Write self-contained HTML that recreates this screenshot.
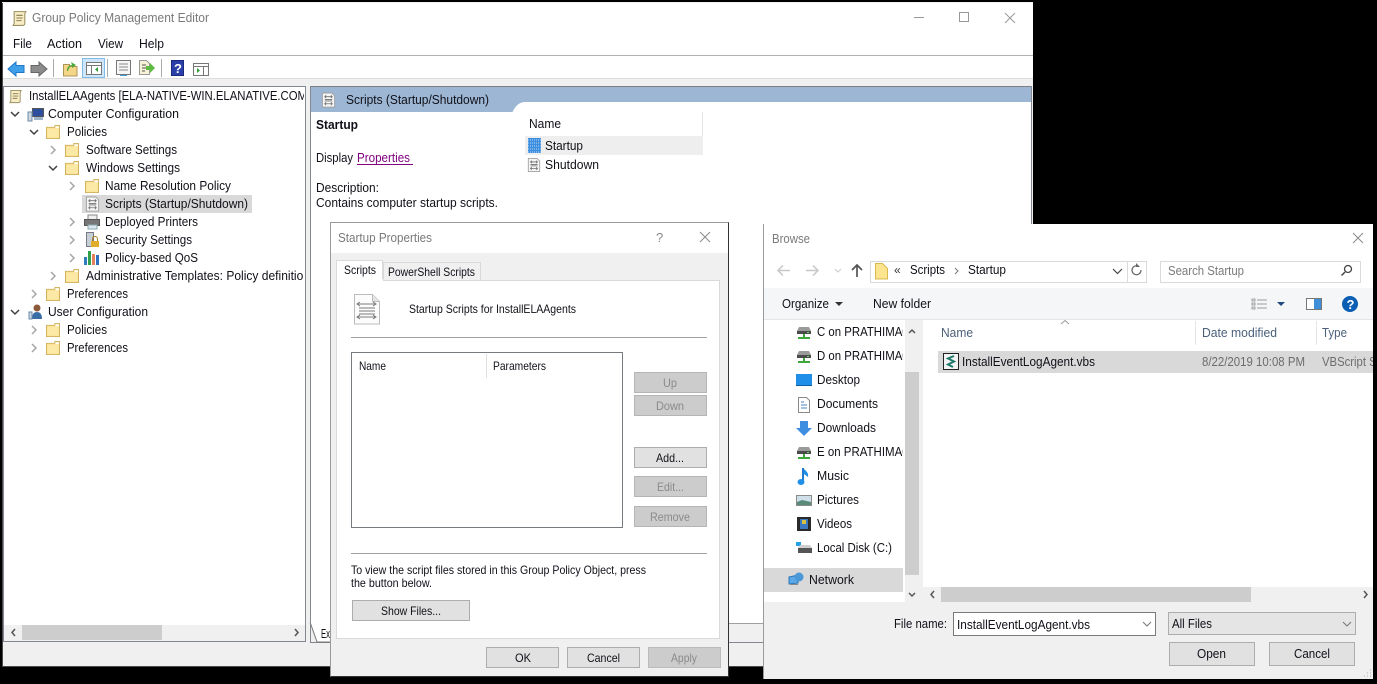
<!DOCTYPE html>
<html><head><meta charset="utf-8"><title>Group Policy Management Editor</title>
<style>
html,body{margin:0;padding:0;background:#000;width:1377px;height:684px;overflow:hidden}
svg{display:block}
text{font-family:"Liberation Sans",sans-serif;font-size:12.5px;fill:#101018}
.g{fill:#7a7a7a}.d{fill:#8a8a8a}.n{font-size:12px}
</style></head><body>
<svg xmlns="http://www.w3.org/2000/svg" width="1377" height="684" viewBox="0 0 1377 684">
<defs>
<symbol id="f" viewBox="0 0 15 15" overflow="visible"><path d="M.5 2.500h9v-2h5v14h-14z" fill="#fbe08a" stroke="#d0b060"/><path d="M10 1.500h4v2h-4z" fill="#fff"/><path d="M1.500 4h12v9.500h-12z" fill="#fde9a6"/></symbol>
<symbol id="cr" viewBox="0 0 10 10"><path d="M3 1l4 4-4 4" fill="none" stroke="#a6a6a6" stroke-width="1.500"/></symbol>
<symbol id="cd" viewBox="0 0 10 10"><path d="M1 3l4 4 4-4" fill="none" stroke="#404040" stroke-width="1.500"/></symbol>
<symbol id="s" viewBox="0 0 16 16"><path d="M1.500.5h10l3 3v12h-13z" fill="#f6f6f6" stroke="#a0a0a0"/><path d="M4 4.500h8M4 7.500h8M4 9h8M4 12h8M5.500 3L4 4.500 5.500 6M10.500 3L12 4.500 10.500 6M5.500 10.500L4 12l1.500 1.500M10.500 10.500L12 12l-1.500 1.500" stroke="#6f6f6f" fill="none" stroke-width=".9"/></symbol>
<symbol id="roll" viewBox="0 0 16 16"><path d="M3 1.500h11l-1 2v9c0 1.500-1 2-2 2H2l1-2z" fill="#f7edc6" stroke="#9c8f62"/><path d="M5 5h6M5 7.500h6M5 10h5" stroke="#8a7d50" fill="none"/></symbol>
<symbol id="nd" viewBox="0 0 16 14"><path d="M1 5l2-4h10l2 4v3H1z" fill="#9a9a9a"/><path d="M1 5h14v3H1z" fill="#4b4b4b"/><rect x="11" y="6" width="2" height="1" fill="#5fe05f"/><path d="M8 8v3M2 12h12" stroke="#3da63d" stroke-width="2"/></symbol>
<clipPath id="c1"><rect x="5" y="88" width="299" height="536"/></clipPath>
<clipPath id="c2"><rect x="764" y="320" width="139" height="270"/></clipPath>
<clipPath id="c3"><rect x="925" y="320" width="448" height="266"/></clipPath>
</defs>

<rect x="0" y="0" width="1377" height="684" fill="#000"/>
<!-- main window -->
<rect x="2" y="2" width="1031" height="664" fill="#f0f0f0"/>
<path d="M2.500 3v663.500H1033" fill="none" stroke="#4a4a4a"/>
<rect x="3" y="3" width="1030" height="76" fill="#fff"/>
<use href="#roll" x="11" y="10" width="17" height="17"/>
<text class="g" x="32" y="22" textLength="177" lengthAdjust="spacingAndGlyphs">Group Policy Management Editor</text>
<path d="M914 17.500h10" stroke="#999"/><rect x="959.500" y="12.500" width="9" height="9" fill="none" stroke="#999"/><path d="M1005 13l10 10M1015 13l-10 10" stroke="#999"/>
<text x="13" y="48" textLength="19" lengthAdjust="spacingAndGlyphs">File</text>
<text x="47" y="48" textLength="35" lengthAdjust="spacingAndGlyphs">Action</text>
<text x="98" y="48" textLength="25" lengthAdjust="spacingAndGlyphs">View</text>
<text x="139" y="48" textLength="25" lengthAdjust="spacingAndGlyphs">Help</text>
<rect x="3" y="55" width="1030" height="1" fill="#b0b0b0"/>
<!-- toolbar -->
<path d="M8 69l8-7v3.500h8v7h-8V76z" fill="#3f9fe8" stroke="#1f78c8"/>
<path d="M47 69l-8-7v3.500h-8v7h8V76z" fill="#8c8c8c" stroke="#666"/>
<rect x="53" y="59" width="1" height="18" fill="#aaa"/>
<path d="M63.500 64.500h6v2h7.500v9.500h-13.500z" fill="#f3d687" stroke="#b09656"/><path d="M67 71c0-4 2-6 5-6l-1-3 5 3-4 3 0-2c-2 0-3 2-4 5z" fill="#4aa83a"/>
<rect x="82.500" y="58.500" width="22" height="19" fill="#cfe6fa" stroke="#7fbce9"/>
<rect x="86.500" y="62.500" width="15" height="12" fill="#fff" stroke="#777"/><path d="M86 65.500h15M91.500 66v8" stroke="#777"/><path d="M98 67v5l-3-2.500z" fill="#2e9e38"/>
<rect x="107" y="59" width="1" height="18" fill="#aaa"/>
<rect x="116.500" y="60.500" width="14" height="14" fill="#f6f6f6" stroke="#777"/><path d="M119 64h9M119 67h9M119 70h9" stroke="#8a8a8a"/><rect x="120" y="75" width="7" height="1" fill="#3aa0e0"/>
<path d="M139.500 60.500h7l3 3v11h-10z" fill="#f7f1d7" stroke="#999"/><path d="M142 65h4M142 68h4M142 71h3" stroke="#555"/><path d="M146 66h4v-3l5 5-5 5v-3h-4z" fill="#5dbb3f"/>
<rect x="161" y="59" width="1" height="18" fill="#aaa"/>
<rect x="171.500" y="60.500" width="12" height="15" fill="#2b3fa8" stroke="#1b2a7c"/><text x="174" y="73" style="font-size:13px;font-weight:bold;fill:#fff">?</text>
<rect x="193.500" y="63.500" width="15" height="12" fill="#fff" stroke="#777"/><path d="M193 66.500h15M203.500 67v8" stroke="#777"/><path d="M197 68v5l3-2.500z" fill="#2e9e38"/>

<rect x="3" y="79" width="1030" height="7" fill="#f0f0f0"/>
<rect x="3" y="78" width="1030" height="1" fill="#dcdcdc"/>

<!-- left pane -->
<rect x="3.500" y="86.500" width="302" height="555" fill="#fff" stroke="#828790"/>
<rect x="82" y="195" width="170" height="18" fill="#d9d9d9"/>
<g clip-path="url(#c1)">
<text x="29" y="100" textLength="278" lengthAdjust="spacingAndGlyphs">InstallELAAgents [ELA-NATIVE-WIN.ELANATIVE.COM</text>
<text x="48" y="118" textLength="131" lengthAdjust="spacingAndGlyphs">Computer Configuration</text>
<text x="67" y="136" textLength="40" lengthAdjust="spacingAndGlyphs">Policies</text>
<text x="86" y="154" textLength="91" lengthAdjust="spacingAndGlyphs">Software Settings</text>
<text x="86" y="172" textLength="94" lengthAdjust="spacingAndGlyphs">Windows Settings</text>
<text x="105" y="190" textLength="126" lengthAdjust="spacingAndGlyphs">Name Resolution Policy</text>
<text x="105" y="208" textLength="143" lengthAdjust="spacingAndGlyphs">Scripts (Startup/Shutdown)</text>
<text x="105" y="226" textLength="93" lengthAdjust="spacingAndGlyphs">Deployed Printers</text>
<text x="105" y="244" textLength="87" lengthAdjust="spacingAndGlyphs">Security Settings</text>
<text x="105" y="262" textLength="93" lengthAdjust="spacingAndGlyphs">Policy-based QoS</text>
<text x="86" y="280" textLength="230" lengthAdjust="spacingAndGlyphs">Administrative Templates: Policy definitions</text>
<text x="67" y="298" textLength="61" lengthAdjust="spacingAndGlyphs">Preferences</text>
<text x="48" y="316" textLength="100" lengthAdjust="spacingAndGlyphs">User Configuration</text>
<text x="67" y="334" textLength="40" lengthAdjust="spacingAndGlyphs">Policies</text>
<text x="67" y="352" textLength="61" lengthAdjust="spacingAndGlyphs">Preferences</text>
</g>
<use href="#roll" x="8" y="89" width="15" height="15"/>
<use href="#cd" x="10" y="109" width="10" height="10"/>
<use href="#cd" x="29" y="127" width="10" height="10"/>
<use href="#cr" x="48" y="145" width="10" height="10"/>
<use href="#cd" x="48" y="163" width="10" height="10"/>
<use href="#cr" x="67" y="181" width="10" height="10"/>
<use href="#cr" x="67" y="217" width="10" height="10"/>
<use href="#cr" x="67" y="235" width="10" height="10"/>
<use href="#cr" x="67" y="253" width="10" height="10"/>
<use href="#cr" x="48" y="271" width="10" height="10"/>
<use href="#cr" x="29" y="289" width="10" height="10"/>
<use href="#cd" x="10" y="307" width="10" height="10"/>
<use href="#cr" x="29" y="325" width="10" height="10"/>
<use href="#cr" x="29" y="343" width="10" height="10"/>
<use href="#f" x="46" y="125" width="14" height="14"/>
<use href="#f" x="65" y="143" width="14" height="14"/>
<use href="#f" x="65" y="161" width="14" height="14"/>
<use href="#f" x="85" y="179" width="14" height="14"/>
<use href="#f" x="65" y="269" width="14" height="14"/>
<use href="#f" x="46" y="287" width="14" height="14"/>
<use href="#f" x="46" y="323" width="14" height="14"/>
<use href="#f" x="46" y="341" width="14" height="14"/>
<!-- computer config icon -->
<rect x="32.500" y="108.500" width="11" height="8" fill="#2b4f9e" stroke="#555"/><rect x="28" y="112" width="4" height="9" fill="#cfd8e0" stroke="#6a8aa8"/><rect x="34" y="117" width="9" height="3" fill="#9db4c9"/>
<!-- user config icon -->
<circle cx="37" cy="308" r="3.500" fill="#8a5a3a"/><path d="M32 319c0-5 2-7 5-7s5 2 5 7z" fill="#3a6da5"/><rect x="29" y="312" width="3" height="7" fill="#cfd8e0" stroke="#6a8aa8"/>
<!-- scripts -->
<use href="#s" x="85" y="196" width="15" height="16"/>
<!-- printer -->
<rect x="88" y="215" width="9" height="5" fill="#eee" stroke="#888"/><rect x="84.500" y="219.500" width="15" height="6" fill="#777" stroke="#555"/><rect x="88" y="225" width="9" height="4" fill="#dce8f2" stroke="#8aa"/>
<!-- security -->
<rect x="86.500" y="232.500" width="7" height="14" fill="#c6ced6" stroke="#778"/><rect x="91" y="241" width="8" height="6" fill="#e0ad2c"/><path d="M92.500 241v-2a2.500 2.500 0 0 1 5 0v2" fill="none" stroke="#a87d18"/>
<!-- qos -->
<rect x="84" y="257" width="3" height="8" fill="#2e7fc1"/><rect x="88" y="251" width="3" height="14" fill="#2fa04a"/><rect x="92" y="254" width="3" height="11" fill="#e3825a"/><rect x="96" y="255" width="3" height="10" fill="#2e6fc1"/>
<!-- left h scrollbar -->
<rect x="4" y="625" width="301" height="16" fill="#f0f0f0"/><rect x="22" y="625" width="140" height="15" fill="#cdcdcd"/>
<path d="M15 629l-3 3.500 3 3.500M295 629l3 3.500-3 3.500" fill="none" stroke="#555" stroke-width="1.500"/>

<!-- right pane -->
<rect x="310.500" y="86.500" width="721" height="556" fill="#fff" stroke="#828790"/>
<rect x="311" y="86" width="720" height="2" fill="#808080"/>
<rect x="311" y="87" width="720" height="25" fill="#9cb6d3"/>
<path d="M512 113c3-6 6-11 14-11H1031v12H512z" fill="#fff"/>
<use href="#s" x="321" y="92" width="15" height="16"/>
<text x="346" y="104" textLength="143" lengthAdjust="spacingAndGlyphs">Scripts (Startup/Shutdown)</text>
<text x="316" y="129" textLength="42" lengthAdjust="spacingAndGlyphs" font-weight="bold">Startup</text>
<text x="316" y="162" textLength="37" lengthAdjust="spacingAndGlyphs">Display</text>
<text x="357" y="162" textLength="53" lengthAdjust="spacingAndGlyphs" style="fill:#800080">Properties</text>
<rect x="357" y="164" width="56" height="1" fill="#800080"/>
<text x="316" y="192" textLength="63" lengthAdjust="spacingAndGlyphs">Description:</text>
<text x="316" y="207" textLength="182" lengthAdjust="spacingAndGlyphs">Contains computer startup scripts.</text>
<text x="529" y="128" textLength="32" lengthAdjust="spacingAndGlyphs">Name</text>
<rect x="702" y="112" width="1" height="24" fill="#e5e5e5"/>
<rect x="525" y="136" width="178" height="19" fill="#eeeeee"/>
<rect x="528" y="138" width="13" height="15" fill="#3c8fe0"/>
<path d="M528 140h13M528 143h13M528 146h13M528 149h13M528 152h13" stroke="#bcd8f4" stroke-dasharray="1 1"/>
<text x="545" y="150" textLength="38" lengthAdjust="spacingAndGlyphs">Startup</text>
<use href="#s" x="527" y="157" width="14" height="16"/>
<text x="545" y="169" textLength="54" lengthAdjust="spacingAndGlyphs">Shutdown</text>
<!-- bottom tab -->
<rect x="311" y="623" width="720" height="1" fill="#a0a0a0"/>
<rect x="311" y="624" width="720" height="18" fill="#f0f0f0"/>
<path d="M310 622l7 20h14v-19" fill="#fff" stroke="#777"/>
<text x="321" y="638" textLength="9" lengthAdjust="spacingAndGlyphs">Ex</text>

<!-- Startup Properties dialog -->
<rect x="330.500" y="222.500" width="398" height="454" fill="#f0f0f0" stroke="#9a9a9a"/>
<path d="M330.500 676.500h398v-454" fill="none" stroke="#333"/>
<rect x="331" y="223" width="397" height="30" fill="#fff"/>
<text class="g" x="338" y="242" textLength="94" lengthAdjust="spacingAndGlyphs">Startup Properties</text>
<text x="656" y="242" style="font-size:13px;fill:#888">?</text>
<path d="M700 232l10 10M710 232l-10 10" stroke="#8a8a8a"/>
<rect x="336.500" y="280.500" width="383" height="358" fill="#fff" stroke="#d9d9d9"/>
<rect x="383.500" y="262.500" width="97" height="18" fill="#f0f0f0" stroke="#d9d9d9"/>
<path d="M336.500 281v-20.500h46v20" fill="#fff" stroke="#d9d9d9"/><rect x="337" y="279" width="46" height="3" fill="#fff"/>
<text class="n" x="344" y="274" textLength="32" lengthAdjust="spacingAndGlyphs">Scripts</text>
<text class="n" x="388" y="276" textLength="87" lengthAdjust="spacingAndGlyphs">PowerShell Scripts</text>
<path d="M354.500 294.500h18l7 7v22.500h-25z" fill="#fcfcfc" stroke="#bbb"/>
<path d="M372.500 294.500v7h7" fill="#e5e5e5" stroke="#bbb"/>
<path d="M357 304h19M359 308h16M359 311h16M359 314h16M357 317h19M360 302l-3 2 3 2M373 302l3 2-3 2M360 315l-3 2 3 2M373 315l3 2-3 2" fill="none" stroke="#7a7a7a"/>
<text class="n" x="409" y="313" textLength="167" lengthAdjust="spacingAndGlyphs">Startup Scripts for InstallELAAgents</text>
<rect x="351" y="337" width="356" height="1" fill="#a0a0a0"/>
<rect x="351.500" y="352.500" width="271" height="175" fill="#fff" stroke="#767b80"/>
<text class="n" x="359" y="370" textLength="27" lengthAdjust="spacingAndGlyphs">Name</text>
<rect x="486" y="354" width="1" height="24" fill="#e0e0e0"/>
<text class="n" x="493" y="370" textLength="53" lengthAdjust="spacingAndGlyphs">Parameters</text>

<g stroke="#b5b5b5" fill="#cccccc">
<rect x="634.500" y="372.500" width="72" height="20"/>
<rect x="634.500" y="395.500" width="72" height="20"/>
<rect x="634.500" y="476.500" width="72" height="20"/>
<rect x="634.500" y="506.500" width="72" height="20"/>
</g>
<rect x="634.500" y="447.500" width="72" height="20" fill="#e1e1e1" stroke="#adadad"/>
<text class="n d" x="663" y="387" textLength="14" lengthAdjust="spacingAndGlyphs">Up</text>
<text class="n d" x="656" y="410" textLength="28" lengthAdjust="spacingAndGlyphs">Down</text>
<text class="n" x="656" y="462" textLength="28" lengthAdjust="spacingAndGlyphs">Add...</text>
<text class="n d" x="657" y="491" textLength="27" lengthAdjust="spacingAndGlyphs">Edit...</text>
<text class="n d" x="650" y="521" textLength="40" lengthAdjust="spacingAndGlyphs">Remove</text>
<rect x="351" y="553" width="356" height="1" fill="#a0a0a0"/>
<text class="n" x="351" y="574" textLength="295" lengthAdjust="spacingAndGlyphs">To view the script files stored in this Group Policy Object, press</text>
<text class="n" x="351" y="587" textLength="81" lengthAdjust="spacingAndGlyphs">the button below.</text>
<rect x="352.500" y="600.500" width="117" height="20" fill="#e1e1e1" stroke="#adadad"/>
<text class="n" x="381" y="615" textLength="60" lengthAdjust="spacingAndGlyphs">Show Files...</text>
<rect x="486.500" y="647.500" width="72" height="20" fill="#e1e1e1" stroke="#adadad"/>
<rect x="567.500" y="647.500" width="72" height="20" fill="#e1e1e1" stroke="#adadad"/>
<rect x="648.500" y="647.500" width="72" height="20" fill="#cccccc" stroke="#bbb"/>
<text class="n" x="515" y="662" textLength="16" lengthAdjust="spacingAndGlyphs">OK</text>
<text class="n" x="587" y="662" textLength="33" lengthAdjust="spacingAndGlyphs">Cancel</text>
<text class="n d" x="671" y="662" textLength="26" lengthAdjust="spacingAndGlyphs">Apply</text>

<!-- Browse dialog -->
<rect x="763" y="224" width="610" height="455" fill="#f0f0f0"/>
<path d="M763.500 224v455" stroke="#9a9a9a"/>
<rect x="764" y="224" width="609" height="64" fill="#fff"/>
<text class="g" x="772" y="243" textLength="38" lengthAdjust="spacingAndGlyphs">Browse</text>
<path d="M1353 233l10 10M1363 233l-10 10" stroke="#8a8a8a"/>
<path d="M778 270.500h12M783 265.500l-5 5 5 5M806 270.500h12M813 265.500l5 5-5 5" fill="none" stroke="#c8c8c8" stroke-width="1.500"/>
<path d="M835 269l3 3 3-3" fill="none" stroke="#ccc"/>
<path d="M857 277v-12M852 270l5-5 5 5" fill="none" stroke="#555" stroke-width="1.700"/>
<rect x="870.500" y="261.500" width="276" height="21" fill="#fff" stroke="#d9d9d9"/>
<rect x="1127" y="262" width="1" height="20" fill="#d9d9d9"/>
<path d="M875.500 263.500h7l5 5v10.500h-12z" fill="#fde48f" stroke="#d9b94e"/>
<text x="894" y="274" style="font-size:12px;fill:#333">«</text>
<text x="910" y="274" textLength="35" lengthAdjust="spacingAndGlyphs">Scripts</text>
<path d="M955 268l3 3-3 3" fill="none" stroke="#777"/>
<text x="968" y="274" textLength="38" lengthAdjust="spacingAndGlyphs">Startup</text>
<path d="M1113 269l4.500 4.500 4.500-4.500" fill="none" stroke="#444" stroke-width="1.200"/>
<path d="M1141 270a4.500 4.500 0 1 1-2-3.500" fill="none" stroke="#666" stroke-width="1.200"/><path d="M1136 263v4h4z" fill="#666"/>
<rect x="1160.500" y="261.500" width="200" height="21" fill="#fff" stroke="#d9d9d9"/>
<text class="g" x="1168" y="275" textLength="76" lengthAdjust="spacingAndGlyphs">Search Startup</text>
<circle cx="1348" cy="269" r="3.500" fill="none" stroke="#444" stroke-width="1.300"/><path d="M1345 272l-3.500 3.500" stroke="#444" stroke-width="1.500"/>
<rect x="764" y="288" width="609" height="31" fill="#f5f6f7"/>
<text x="782" y="308" textLength="47" lengthAdjust="spacingAndGlyphs">Organize</text>
<path d="M835 302h8l-4 4z" fill="#333"/>
<text x="873" y="308" textLength="58" lengthAdjust="spacingAndGlyphs">New folder</text>
<path d="M1252 299h3v2h-3zM1252 303h3v2h-3zM1252 307h3v2h-3z" fill="none" stroke="#888" stroke-width=".8"/><path d="M1257 300h10M1257 304h10M1257 308h10" stroke="#999"/>
<path d="M1277 302h8l-4 4z" fill="#1e4a80"/>
<rect x="1306.500" y="298.500" width="15" height="11" fill="#fff" stroke="#777"/><rect x="1314" y="299" width="7" height="10" fill="#3f8fd8"/>
<circle cx="1350" cy="304" r="8" fill="#0a5fb4"/><text x="1346.500" y="309" style="font-size:13px;font-weight:bold;fill:#fff">?</text>

<!-- nav pane -->
<rect x="764" y="319" width="155" height="283" fill="#fff"/>
<rect x="905" y="320" width="14" height="282" fill="#f0f0f0"/>
<rect x="905" y="372" width="14" height="203" fill="#cdcdcd"/>
<path d="M909 333l3-3 3 3M909 593l3 3 3-3" fill="none" stroke="#555" stroke-width="1.500"/>
<rect x="764" y="568" width="139" height="24" fill="#d9d9d9"/>
<g clip-path="url(#c2)">
<text x="817" y="336" textLength="98" lengthAdjust="spacingAndGlyphs">C on PRATHIMA03</text>
<text x="817" y="360" textLength="98" lengthAdjust="spacingAndGlyphs">D on PRATHIMA03</text>
<text x="817" y="384" textLength="43" lengthAdjust="spacingAndGlyphs">Desktop</text>
<text x="817" y="408" textLength="61" lengthAdjust="spacingAndGlyphs">Documents</text>
<text x="817" y="432" textLength="59" lengthAdjust="spacingAndGlyphs">Downloads</text>
<text x="817" y="456" textLength="98" lengthAdjust="spacingAndGlyphs">E on PRATHIMA03</text>
<text x="817" y="480" textLength="32" lengthAdjust="spacingAndGlyphs">Music</text>
<text x="817" y="504" textLength="42" lengthAdjust="spacingAndGlyphs">Pictures</text>
<text x="817" y="528" textLength="35" lengthAdjust="spacingAndGlyphs">Videos</text>
<text x="817" y="552" textLength="75" lengthAdjust="spacingAndGlyphs">Local Disk (C:)</text>
<text x="809" y="584" textLength="45" lengthAdjust="spacingAndGlyphs">Network</text>
</g>
<use href="#nd" x="796" y="326" width="16" height="14"/>
<use href="#nd" x="796" y="350" width="16" height="14"/>
<use href="#nd" x="796" y="446" width="16" height="14"/>
<rect x="796" y="374" width="16" height="12" fill="#1f8fe8"/><rect x="796" y="385" width="16" height="1" fill="#0f5fa8"/>
<path d="M798.500 397.500h8l3 3v12h-11z" fill="#fff" stroke="#888"/><path d="M801 402h3M801 405h6M801 408h6" stroke="#4a86c0"/>
<path d="M800 421h8v7h4l-8 8-8-8h4z" fill="#3d8ee0"/>
<path d="M803 468v14" stroke="#1f7ad0" stroke-width="2"/><ellipse cx="801" cy="482" rx="3.500" ry="3" fill="#1f8fe8"/><path d="M804 469c2 2 5 4 4 8l-4-3z" fill="#1f8fe8"/>
<rect x="796.500" y="495.500" width="15" height="10" fill="#cfe0ea" stroke="#8a8a8a"/><path d="M797 502l5-2 9 2v3h-14z" fill="#5a8a7a"/>
<rect x="797" y="517" width="14" height="14" fill="#2a2a2a"/><rect x="800" y="519" width="8" height="10" fill="#3a78c0"/><rect x="802" y="520" width="4" height="4" fill="#d8c040"/>
<rect x="796" y="542" width="5" height="4" fill="#22a0e8"/><rect x="798" y="548" width="14" height="5" fill="#555"/><path d="M798 548l2-3h10l2 3z" fill="#cfcfcf"/>
<path d="M789 577l9-2v8l-9 1z" fill="#5aa8e8" stroke="#2a78b8"/><circle cx="799" cy="577" r="4.500" fill="#4a98d8"/><rect x="790" y="584" width="8" height="1" fill="#888"/>

<!-- file list -->
<rect x="923" y="319" width="450" height="283" fill="#fff"/>
<rect x="764" y="319" width="609" height="1" fill="#e5e5e5"/>
<path d="M1061 324l4-3.500 4 3.500" fill="none" stroke="#9a9a9a"/>
<text class="g" x="941" y="337" textLength="32" lengthAdjust="spacingAndGlyphs" style="fill:#4c607a">Name</text>
<rect x="1195" y="321" width="1" height="24" fill="#e5e5e5"/>
<text x="1202" y="337" textLength="75" lengthAdjust="spacingAndGlyphs" style="fill:#4c607a">Date modified</text>
<rect x="1316" y="321" width="1" height="24" fill="#e5e5e5"/>
<text x="1322" y="337" textLength="25" lengthAdjust="spacingAndGlyphs" style="fill:#4c607a">Type</text>
<rect x="938" y="351" width="435" height="22" fill="#d9d9d9"/>
<rect x="943.500" y="353.500" width="15" height="16" fill="#f4f4f4" stroke="#222"/><path d="M954 356l-6 2.500 6 3-6 3 5 2.500" fill="none" stroke="#1f7a6a" stroke-width="2"/>
<text x="962" y="366" textLength="133" lengthAdjust="spacingAndGlyphs">InstallEventLogAgent.vbs</text>
<g clip-path="url(#c3)">
<text class="g" x="1202" y="366" textLength="103" lengthAdjust="spacingAndGlyphs" style="fill:#6d6d6d">8/22/2019 10:08 PM</text>
<text x="1322" y="366" textLength="76" lengthAdjust="spacingAndGlyphs" style="fill:#6d6d6d">VBScript Script</text>
</g>
<rect x="923" y="587" width="450" height="15" fill="#f0f0f0"/>
<rect x="941" y="587" width="310" height="15" fill="#cdcdcd"/>
<path d="M934 591l-3 3.500 3 3.500M1364 591l3 3.500-3 3.500" fill="none" stroke="#555" stroke-width="1.500"/>
<rect x="764" y="602" width="609" height="77" fill="#f0f0f0"/>
<text x="894" y="628" textLength="53" lengthAdjust="spacingAndGlyphs">File name:</text>
<rect x="953.500" y="612.500" width="202" height="23" fill="#fff" stroke="#7a7a7a"/>
<text x="957" y="629" textLength="133" lengthAdjust="spacingAndGlyphs">InstallEventLogAgent.vbs</text>
<path d="M1143 622l4 4 4-4" fill="none" stroke="#777"/>
<rect x="1168.500" y="612.500" width="187" height="22" fill="#e5e5e5" stroke="#adadad"/>
<text x="1172" y="628" textLength="40" lengthAdjust="spacingAndGlyphs">All Files</text>
<path d="M1343 622l4 4 4-4" fill="none" stroke="#777"/>
<rect x="1169.500" y="642.500" width="85" height="23" fill="#e1e1e1" stroke="#adadad"/>
<rect x="1269.500" y="642.500" width="85" height="23" fill="#e1e1e1" stroke="#adadad"/>
<text x="1197" y="658" textLength="29" lengthAdjust="spacingAndGlyphs">Open</text>
<text x="1294" y="658" textLength="36" lengthAdjust="spacingAndGlyphs">Cancel</text>
<path d="M1370 670h1M1367 673h1M1370 673h1M1364 676h1M1367 676h1M1370 676h1" stroke="#b0b0b0"/>
</svg>
</body></html>
